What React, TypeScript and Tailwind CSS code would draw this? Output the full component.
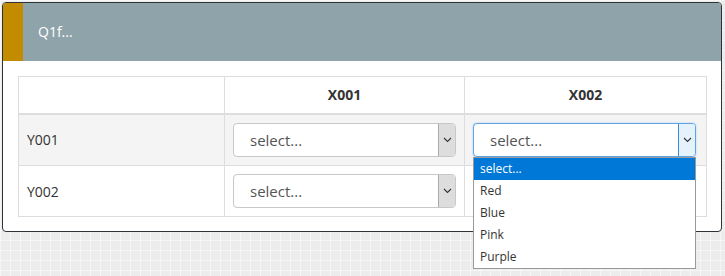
const cols = ["X001", "X002"]
const rows = ["Y001", "Y002"]
const options = ["select...", "Red", "Blue", "Pink", "Purple"]

const Chevron = () => (
  <svg width="9" height="6" viewBox="0 0 9 6" fill="none">
    <path d="M1 1l3.5 3.5L8 1" stroke="#333" strokeWidth="1.1" />
  </svg>
)

const Select = ({ open }: { open?: boolean }) => {
  return (
    <div className="relative w-[223px]">
      <div
        className={
          open
            ? "flex h-[34px] items-stretch rounded-[4px] border border-[#5fa3e6] bg-white shadow-[0_0_2px_#9cc8f2]"
            : "flex h-[34px] items-stretch rounded-[4px] border border-[#c8c8c8] bg-white"
        }
      >
        <span className="flex flex-1 items-center pl-[16px] text-[15px] text-[#555]">select...</span>
        <span
          className={
            open
              ? "flex w-[17px] items-center justify-center rounded-r-[3px] border-l border-[#3d8be0] bg-[#e5f1fb]"
              : "flex w-[17px] items-center justify-center rounded-r-[3px] border-l border-[#aaa] bg-[#dddddd]"
          }
        >
          <Chevron />
        </span>
      </div>
      {open && (
        <ul className="absolute left-0 top-full z-10 w-[223px] border border-[#9a9a9a] bg-white font-['Open_Sans',sans-serif] text-[12px] text-[#333]">
          {options.map((opt, idx) => (
            <li
              key={idx}
              className={
                idx === 0
                  ? "flex h-[22px] items-center bg-[#0078d7] pl-[6px] text-white"
                  : "flex h-[22px] items-center pl-[6px]"
              }
            >
              {opt}
            </li>
          ))}
        </ul>
      )}
    </div>
  )
}

export default function App() {
  return (
    <div
      className="h-[276px] w-[725px] bg-[#ececec] pt-[2px] pl-[2px] font-['Open_Sans',sans-serif] [background-image:linear-gradient(#f6f6f6_1px,transparent_1px),linear-gradient(90deg,#f6f6f6_1px,transparent_1px)] [background-size:10px_10px]"
    >
      <div className="w-[720px] rounded-[4px] border border-[#2e3338] bg-white">
        <div className="flex h-[58px] overflow-hidden rounded-t-[3px] bg-[#8fa3aa]">
          <div className="w-[20px] bg-[#c28b00]" />
          <span className="flex items-center pl-[15px] pb-[2px] text-[14px] text-white">Q1f...</span>
        </div>

        <div className="px-[15px] pt-[15px] pb-[14px]">
          <table className="w-[688px] border-collapse table-fixed text-[14px] text-[#333]">
            <colgroup>
              <col className="w-[206px]" />
              <col className="w-[240px]" />
              <col className="w-[242px]" />
            </colgroup>
            <thead>
              <tr className="h-[37px]">
                <th className="border border-b-2 border-[#dddddd]" />
                {cols.map((c) => (
                  <th key={c} className="border border-b-2 border-[#dddddd] text-center font-bold">
                    {c}
                  </th>
                ))}
              </tr>
            </thead>
            <tbody>
              {rows.map((r, ri) => (
                <tr key={r} className={ri === 0 ? "h-[52px] bg-[#f4f4f4]" : "h-[51px]"}>
                  <td className="border border-[#dddddd] pl-[8px]">{r}</td>
                  {cols.map((c, ci) => (
                    <td key={c} className="border border-[#dddddd] pl-[8px]">
                      <Select open={ri === 0 && ci === 1} />
                    </td>
                  ))}
                </tr>
              ))}
            </tbody>
          </table>
        </div>
      </div>
    </div>
  )
}
